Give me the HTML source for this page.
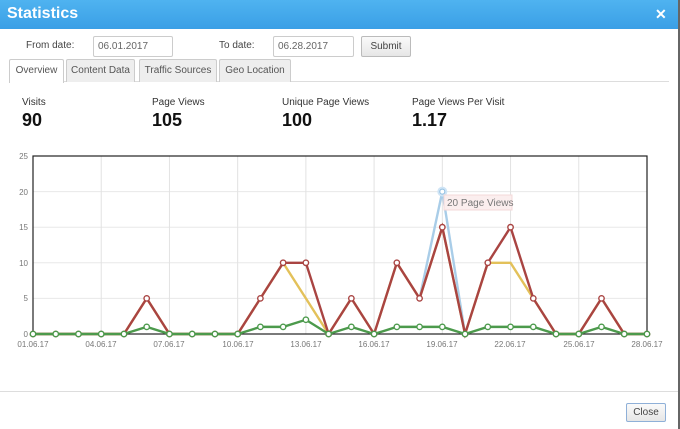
<!DOCTYPE html><html><head><style>
body{margin:0;width:680px;height:429px;background:#fff;font-family:"Liberation Sans",sans-serif;position:relative;overflow:hidden;color:#333}
.a{position:absolute}
.title{left:0;top:0;width:680px;height:29px;background:linear-gradient(#4fb3f0,#3a9fe6);color:#fff;font-weight:bold;font-size:16px}
.inp{border:1px solid #ccc;border-radius:2px;font-size:10px;color:#666;line-height:19px;padding-left:4px;box-sizing:border-box;height:21px}
.lbl{font-size:10px;color:#444}
.btn{border:1px solid #bbb;border-radius:2px;background:linear-gradient(#fafafa,#e6e6e6);font-size:10px;color:#444;text-align:center;box-sizing:border-box}
.tab{top:59px;height:23px;border:1px solid #ccc;border-bottom:none;background:#eee;font-size:10px;color:#555;text-align:center;line-height:22px;box-sizing:border-box;border-radius:2px 2px 0 0}
.sl{font-size:10px;color:#333;top:97px}
.sn{font-size:18px;font-weight:bold;color:#111;top:110px}
</style></head><body>
<div class="a title"><span class="a" style="left:7px;top:5px">Statistics</span><span class="a" style="left:655px;top:6px;font-size:14px">✕</span></div>
<div class="a" style="left:678px;top:0;width:2px;height:429px;background:#666"></div>
<span class="a lbl" style="left:26px;top:40px">From date:</span>
<div class="a inp" style="left:93px;top:36px;width:80px">06.01.2017</div>
<span class="a lbl" style="left:219px;top:40px">To date:</span>
<div class="a inp" style="left:273px;top:36px;width:81px">06.28.2017</div>
<div class="a btn" style="left:361px;top:36px;width:50px;height:21px;line-height:19px">Submit</div>
<div class="a" style="left:9px;top:81px;width:660px;height:1px;background:#ddd"></div>
<div class="a tab" style="left:9px;width:55px;background:#fff;height:24px">Overview</div>
<div class="a tab" style="left:66px;width:69px">Content Data</div>
<div class="a tab" style="left:139px;width:78px">Traffic Sources</div>
<div class="a tab" style="left:219px;width:72px">Geo Location</div>
<span class="a sl" style="left:22px">Visits</span><span class="a sn" style="left:22px">90</span>
<span class="a sl" style="left:152px">Page Views</span><span class="a sn" style="left:152px">105</span>
<span class="a sl" style="left:282px">Unique Page Views</span><span class="a sn" style="left:282px">100</span>
<span class="a sl" style="left:412px">Page Views Per Visit</span><span class="a sn" style="left:412px">1.17</span>
<svg class="a" style="left:0;top:0" width="680" height="429" id="c" font-family="Liberation Sans,sans-serif" font-size="8" fill="#777">
<g id="grid"></g>
<rect x="33" y="156" width="614" height="178" fill="none" stroke="#222" stroke-width="1.2"/>
<text x="28" y="159" text-anchor="end">25</text><text x="28" y="195" text-anchor="end">20</text><text x="28" y="230" text-anchor="end">15</text><text x="28" y="266" text-anchor="end">10</text><text x="28" y="301" text-anchor="end">5</text><text x="28" y="337" text-anchor="end">0</text>
<text x="33" y="347" text-anchor="middle">01.06.17</text><text x="101" y="347" text-anchor="middle">04.06.17</text><text x="169" y="347" text-anchor="middle">07.06.17</text><text x="238" y="347" text-anchor="middle">10.06.17</text><text x="306" y="347" text-anchor="middle">13.06.17</text><text x="374" y="347" text-anchor="middle">16.06.17</text><text x="442" y="347" text-anchor="middle">19.06.17</text><text x="510" y="347" text-anchor="middle">22.06.17</text><text x="579" y="347" text-anchor="middle">25.06.17</text><text x="647" y="347" text-anchor="middle">28.06.17</text>
<g id="lines"></g>
<rect x="444" y="195" width="68" height="15" fill="#fbeeee" stroke="#f3d8d8"/>
<text x="447" y="206" font-size="10" fill="#777">20 Page Views</text>
</svg>
<div class="a" style="left:0;top:391px;width:678px;height:1px;background:#ddd"></div>
<div class="a btn" style="left:626px;top:403px;width:40px;height:19px;line-height:17px;border-color:#8fb0d8;font-size:10px">Close</div>
<script>
const X=d=>33+(d-1)*22.74,Y=v=>334-v*7.12;
let g='';
for(let v=5;v<25;v+=5)g+=`<line x1="33" x2="647" y1="${Y(v)}" y2="${Y(v)}" stroke="#e8e8e8"/>`;
for(let d=4;d<28;d+=3)g+=`<line y1="156" y2="334" x1="${X(d)}" x2="${X(d)}" stroke="#e2e2e2"/>`;
document.getElementById('grid').innerHTML=g;
const red=[0,0,0,0,0,5,0,0,0,0,5,10,10,0,5,0,10,5,15,0,10,15,5,0,0,5,0,0];
const yel=red.slice();yel[12]=5;yel[21]=10;
const grn=[0,0,0,0,0,1,0,0,0,0,1,1,2,0,1,0,1,1,1,0,1,1,1,0,0,1,0,0];
function line(a,c,pts,r){let p=a.map((v,i)=>X(i+1)+','+Y(v)).join(' ');let s=`<polyline points="${p}" fill="none" stroke="${c}" stroke-width="2.4"/>`;if(pts)a.forEach((v,i)=>s+=`<circle cx="${X(i+1)}" cy="${Y(v)}" r="${r}" fill="#fff" stroke="${c}" stroke-width="1.4"/>`);return s}
let s='';
s+=`<polyline points="${X(18)},${Y(5)} ${X(19)},${Y(20)} ${X(20)},${Y(0)}" fill="none" stroke="#a9cde8" stroke-width="2.4"/><circle cx="${X(19)}" cy="${Y(20)}" r="5" fill="#cfe4f5"/><circle cx="${X(19)}" cy="${Y(20)}" r="2.5" fill="#fff" stroke="#8fbde0"/>`;
s+=line(yel,'#e3c15a',false);
s+=line(red,'#a94442',true,2.7);
s+=line(grn,'#4c9a4c',true,2.7);
document.getElementById('lines').innerHTML=s;
</script>
</body></html>
